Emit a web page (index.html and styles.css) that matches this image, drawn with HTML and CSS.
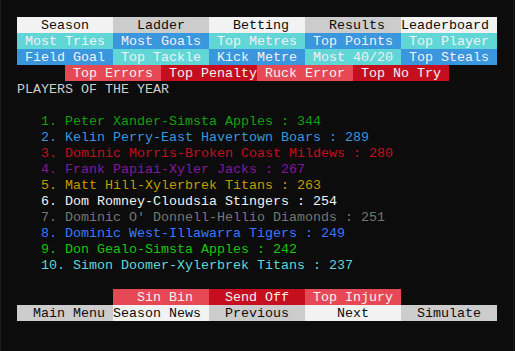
FILE: index.html
```html
<!DOCTYPE html>
<html lang="en">
<head>
<meta charset="utf-8">
<title>Players of the Year</title>
<link rel="stylesheet" href="styles.css">
</head>
<body>
<div class="console">
  <div class="row">
    <span class="cell bg-white">   Season</span>
    <span class="cell bg-gray">   Ladder</span>
    <span class="cell bg-white">   Betting</span>
    <span class="cell bg-gray">   Results</span>
    <span class="cell bg-white">Leaderboard</span>
  </div>
  <div class="row">
    <span class="cell bg-cyan"> Most Tries</span>
    <span class="cell bg-dcyan"> Most Goals</span>
    <span class="cell bg-cyan"> Top Metres</span>
    <span class="cell bg-dcyan"> Top Points</span>
    <span class="cell bg-cyan"> Top Player</span>
  </div>
  <div class="row">
    <span class="cell bg-dcyan"> Field Goal</span>
    <span class="cell bg-cyan"> Top Tackle</span>
    <span class="cell bg-dcyan"> Kick Metre</span>
    <span class="cell bg-cyan"> Most 40/20</span>
    <span class="cell bg-dcyan"> Top Steals</span>
  </div>
  <div class="row indent-half">
    <span class="cell bg-red"> Top Errors</span>
    <span class="cell bg-dred"> Top Penalty</span>
    <span class="cell bg-red"> Ruck Error</span>
    <span class="cell bg-dred"> Top No Try</span>
  </div>
  <div class="row title">PLAYERS OF THE YEAR</div>
  <div class="row"></div>
  <ol class="list">
    <li class="c-dgreen">1. Peter Xander-Simsta Apples : 344</li>
    <li class="c-dcyan">2. Kelin Perry-East Havertown Boars : 289</li>
    <li class="c-dred">3. Dominic Morris-Broken Coast Mildews : 280</li>
    <li class="c-dmagenta">4. Frank Papiai-Xyler Jacks : 267</li>
    <li class="c-dyellow">5. Matt Hill-Xylerbrek Titans : 263</li>
    <li class="c-white">6. Dom Romney-Cloudsia Stingers : 254</li>
    <li class="c-dgray">7. Dominic O' Donnell-Hellio Diamonds : 251</li>
    <li class="c-blue">8. Dominic West-Illawarra Tigers : 249</li>
    <li class="c-green">9. Don Gealo-Simsta Apples : 242</li>
    <li class="c-cyan">10. Simon Doomer-Xylerbrek Titans : 237</li>
  </ol>
  <div class="row"></div>
  <div class="row indent-one">
    <span class="cell bg-red">   Sin Bin</span>
    <span class="cell bg-dred">  Send Off</span>
    <span class="cell bg-red"> Top Injury</span>
  </div>
  <div class="row">
    <span class="cell bg-gray dark">  Main Menu</span>
    <span class="cell bg-white dark">Season News</span>
    <span class="cell bg-gray dark">  Previous</span>
    <span class="cell bg-white dark">    Next</span>
    <span class="cell bg-gray dark">  Simulate</span>
  </div>
</div>
</body>
</html>
```

FILE: styles.css
```css
html {
  background: #0c0c0c;
}
body {
  margin: 0;
  width: 512px;
  height: 351px;
  border-left: 1px solid #1c1c1c;
  border-right: 1px solid #1c1c1c;
  background: #0c0c0c;
  font-family: "Liberation Mono", "Courier New", monospace;
  font-size: 13.3333px;
  line-height: 17px;
  color: #cccccc;
  overflow: hidden;
}
.console {
  padding: 17px 0 0 16px;
  display: flex;
  flex-direction: column;
}
.row {
  display: flex;
  height: 16px;
  white-space: pre;
}
.indent-half {
  padding-left: 48px;
}
.indent-one {
  padding-left: 96px;
}
.cell {
  width: 96px;
  height: 16px;
  white-space: pre;
  color: #f2f2f2;
  overflow: hidden;
}
.bg-white { background: #f2f2f2; color: #0c0c0c; }
.bg-gray { background: #cccccc; color: #0c0c0c; }
.bg-cyan { background: #61d6d6; }
.bg-dcyan { background: #3a96dd; }
.bg-red { background: #e74856; }
.bg-dred { background: #c50f1f; }
.dark { color: #0c0c0c; }
.title {
  color: #cccccc;
}
.list {
  list-style: none;
  margin: 0;
  padding: 0 0 0 24px;
}
.list li {
  height: 16px;
  white-space: pre;
}
.c-dgreen { color: #13a10e; }
.c-dcyan { color: #3a96dd; }
.c-dred { color: #c50f1f; }
.c-dmagenta { color: #881798; }
.c-dyellow { color: #c19c00; }
.c-white { color: #f2f2f2; }
.c-dgray { color: #767676; }
.c-blue { color: #3b78ff; }
.c-green { color: #16c60c; }
.c-cyan { color: #61d6d6; }
```
